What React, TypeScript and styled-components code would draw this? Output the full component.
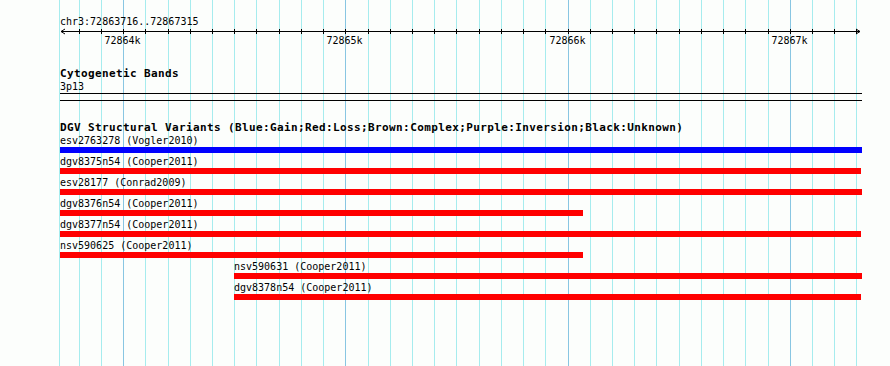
import React from 'react';
import styled, { createGlobalStyle } from 'styled-components';

const START = 72863716;
const END = 72867315;
const X0 = 60;
const SCALE = 800 / 3600;
const px = (p: number) => Math.round(X0 + (p - START) * SCALE);

const ticks: { x: number; major: boolean; label: string }[] = [];
for (let p = 72863800; p <= END; p += 100) {
  ticks.push({ x: px(p), major: p % 1000 === 0, label: `${p / 1000}k` });
}

type Variant = { name: string; source: string; x: number; end: number; color: string };

const variants: Variant[] = [
  { name: 'esv2763278', source: 'Vogler2010', x: 60, end: 862, color: '#0000ff' },
  { name: 'dgv8375n54', source: 'Cooper2011', x: 60, end: 861, color: '#ff0000' },
  { name: 'esv28177', source: 'Conrad2009', x: 60, end: 862, color: '#ff0000' },
  { name: 'dgv8376n54', source: 'Cooper2011', x: 60, end: 583, color: '#ff0000' },
  { name: 'dgv8377n54', source: 'Cooper2011', x: 60, end: 861, color: '#ff0000' },
  { name: 'nsv590625', source: 'Cooper2011', x: 60, end: 583, color: '#ff0000' },
  { name: 'nsv590631', source: 'Cooper2011', x: 234, end: 862, color: '#ff0000' },
  { name: 'dgv8378n54', source: 'Cooper2011', x: 234, end: 861, color: '#ff0000' },
];

const GlobalStyle = createGlobalStyle`
  body {
    margin: 0;
    background: #fcfefc;
  }
`;

const App: React.FC = () => {
  return (
    <>
      <GlobalStyle />
      <Panel>
        <Grid width={890} height={366} shapeRendering="crispEdges">
          <rect x={59} y={0} width={1} height={366} fill="#a6ecee" />
          {ticks.map((t) => (
            <rect
              key={t.x}
              x={t.x}
              y={0}
              width={1}
              height={366}
              fill={t.major ? '#88c6e2' : '#a6ecee'}
            />
          ))}
        </Grid>
        <Content>
          <Ruler>
            <SmallText $left={60}>chr3:72863716..72867315</SmallText>
            <Axis width={890} height={7}>
              <rect x={61} y={3} width={799} height={1} fill="#000" shapeRendering="crispEdges" />
              {ticks.map((t) => (
                <rect key={t.x} x={t.x} y={1} width={1} height={5} fill="#000" shapeRendering="crispEdges" />
              ))}
              {/* arrow heads at both ends */}
              <path d="M65 1 L61 3.5 L65 6" stroke="#000" strokeWidth={1} fill="none" />
              <path d="M856 1 L860 3.5 L856 6" stroke="#000" strokeWidth={1} fill="none" />
            </Axis>
            <TickLabels>
              {ticks
                .filter((t) => t.major)
                .map((t) => (
                  <TickLabel key={t.x} style={{ left: t.x - 0.5 }}>
                    {t.label}
                  </TickLabel>
                ))}
            </TickLabels>
          </Ruler>

          <Track>
            <Title>Cytogenetic Bands</Title>
            <SmallText $left={60}>3p13</SmallText>
            <Band />
          </Track>

          <Track>
            <Title>
              DGV Structural Variants (Blue:Gain;Red:Loss;Brown:Complex;Purple:Inversion;Black:Unknown)
            </Title>
            {variants.map((v) => (
              <FeatureRow key={v.name}>
                <SmallText $left={v.x}>
                  {v.name} ({v.source})
                </SmallText>
                <Bar $color={v.color} style={{ marginLeft: v.x, width: v.end - v.x }} />
              </FeatureRow>
            ))}
          </Track>
        </Content>
      </Panel>
    </>
  );
};

const Panel = styled.div`
  position: relative;
  width: 890px;
  height: 366px;
  overflow: hidden;
  background: #fcfefc;
  color: #000;
`;

const Grid = styled.svg`
  position: absolute;
  top: 0;
  left: 0;
`;

const Content = styled.div`
  position: relative;
  padding-top: 15px;
`;

const Ruler = styled.div`
  display: flex;
  flex-direction: column;
`;

const Axis = styled.svg`
  display: block;
  margin-bottom: -1px;
`;

const SmallText = styled.div<{ $left: number }>`
  margin-left: ${(p) => p.$left}px;
  font-family: 'DejaVu Sans Mono', monospace;
  font-size: 10px;
  line-height: 13px;
  height: 13px;
  white-space: pre;
`;

const TickLabels = styled.div`
  position: relative;
  height: 13px;
`;

const TickLabel = styled.span`
  position: absolute;
  top: 0;
  transform: translateX(-50%);
  font-family: 'DejaVu Sans Mono', monospace;
  font-size: 10px;
  line-height: 13px;
  white-space: pre;
`;

const Track = styled.div`
  margin-top: 21px;
  display: flex;
  flex-direction: column;
`;

const Title = styled.div`
  margin-left: 60px;
  font-family: 'DejaVu Sans Mono', monospace;
  font-weight: bold;
  font-size: 11px;
  letter-spacing: 0.38px;
  line-height: 12px;
  height: 12px;
  white-space: pre;
`;

const Band = styled.div`
  margin-left: 60px;
  width: 802px;
  height: 6px;
  border-top: 1px solid #000;
  border-bottom: 1px solid #000;
`;

const FeatureRow = styled.div`
  height: 21px;
  display: flex;
  flex-direction: column;
`;

const Bar = styled.div<{ $color: string }>`
  height: 6px;
  background: ${(p) => p.$color};
`;

export default App;
